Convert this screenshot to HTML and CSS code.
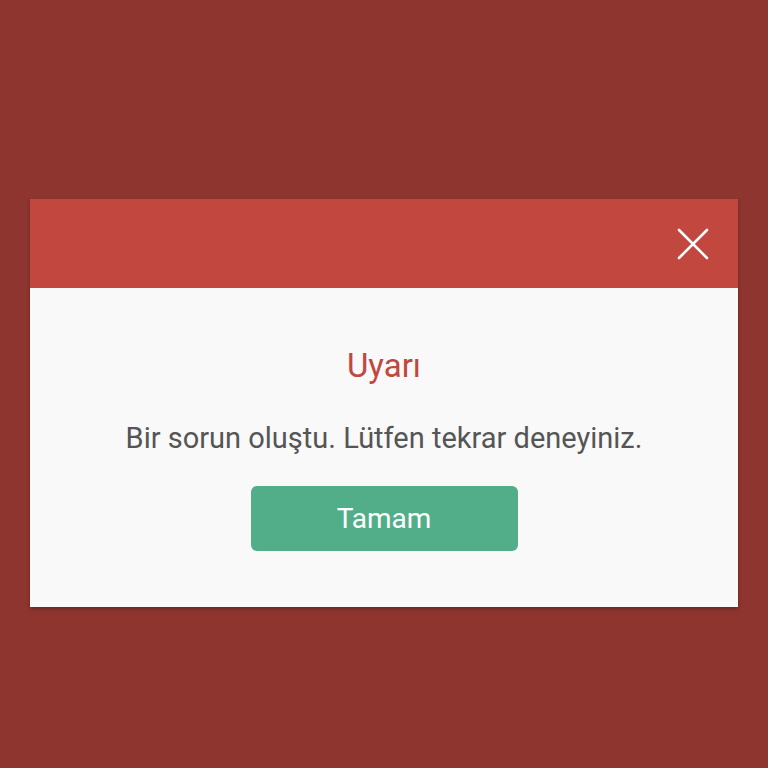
FILE: index.html
```html
<!DOCTYPE html>
<html lang="tr">
<head>
    <meta charset="UTF-8">
    <meta name="viewport" content="width=device-width, initial-scale=1.0">
    <title>Uyarı</title>
    <link rel="stylesheet" href="styles.css">
</head>
<body>
    <div class="dialog">
        <div class="dialog-header">
            <button class="close-btn" aria-label="Kapat">
                <svg width="32" height="32" viewBox="0 0 32 32">
                    <path d="M2 2 L30 30 M30 2 L2 30" stroke="#fff" stroke-width="2.6" stroke-linecap="round" fill="none"/>
                </svg>
            </button>
        </div>
        <div class="dialog-body">
            <h2 class="dialog-title">Uyarı</h2>
            <p class="dialog-message">Bir sorun oluştu. Lütfen tekrar deneyiniz.</p>
            <button class="ok-btn">Tamam</button>
        </div>
    </div>
</body>
</html>
```

FILE: styles.css
```css
body {
    margin: 0;
    padding: 199px 30px 0;
    background: #8e352f;
    font-family: Roboto, 'Noto Sans', sans-serif;
    min-height: 100vh;
    box-sizing: border-box;
}
.dialog {
    background: #f9f9f9;
    box-shadow: 0 2px 4px rgba(0,0,0,0.25);
}
.dialog-header {
    height: 89px;
    background: #c1473f;
    display: flex;
    align-items: center;
    justify-content: flex-end;
    padding-right: 29px;
}
.close-btn {
    background: none;
    border: none;
    padding: 0;
    width: 32px;
    height: 32px;
    cursor: pointer;
}
.close-btn svg {
    display: block;
}
.dialog-body {
    height: 319px;
    display: flex;
    flex-direction: column;
    align-items: center;
    padding-top: 58px;
    box-sizing: border-box;
}
.dialog-title {
    margin: 0;
    font-size: 33px;
    font-weight: normal;
    color: #c1473f;
    line-height: 40px;
}
.dialog-message {
    margin: 34px 0 0;
    font-size: 29px;
    color: #555;
    line-height: 36px;
}
.ok-btn {
    margin-top: 30px;
    width: 267px;
    height: 65px;
    background: #52ae88;
    color: #fff;
    border: none;
    border-radius: 6px;
    font-family: inherit;
    font-size: 28px;
    cursor: pointer;
}
```
